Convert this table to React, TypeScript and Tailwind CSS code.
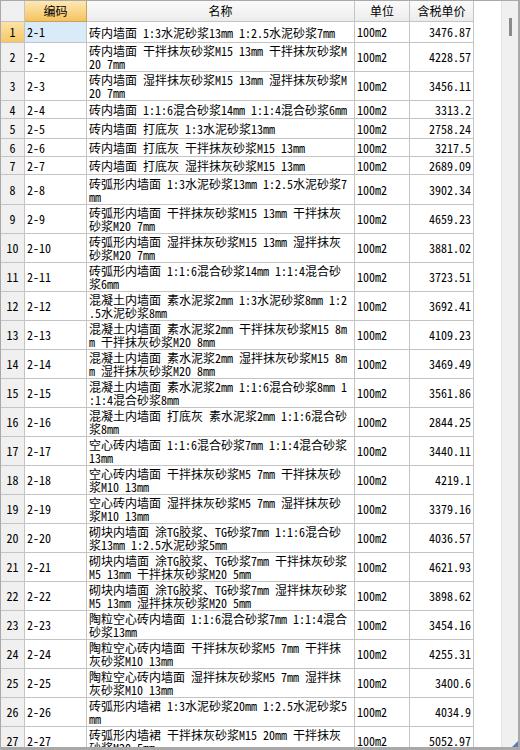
import React from "react";

type Row = {
  no: number;
  code: string;
  name: string[];
  unit: string;
  price: string;
  h: string;
};

const rows: Row[] = [
  { no: 1, code: "2-1", name: ["砖内墙面 1:3水泥砂浆13mm 1:2.5水泥砂浆7mm"], unit: "100m2", price: "3476.87", h: "h-[21px]" },
  { no: 2, code: "2-2", name: ["砖内墙面 干拌抹灰砂浆M15 13mm 干拌抹灰砂浆M", "20 7mm"], unit: "100m2", price: "4228.57", h: "h-[29px]" },
  { no: 3, code: "2-3", name: ["砖内墙面 湿拌抹灰砂浆M15 13mm 湿拌抹灰砂浆M", "20 7mm"], unit: "100m2", price: "3456.11", h: "h-[29px]" },
  { no: 4, code: "2-4", name: ["砖内墙面 1:1:6混合砂浆14mm 1:1:4混合砂浆6mm"], unit: "100m2", price: "3313.2", h: "h-[18px]" },
  { no: 5, code: "2-5", name: ["砖内墙面 打底灰 1:3水泥砂浆13mm"], unit: "100m2", price: "2758.24", h: "h-[20px]" },
  { no: 6, code: "2-6", name: ["砖内墙面 打底灰 干拌抹灰砂浆M15 13mm"], unit: "100m2", price: "3217.5", h: "h-[18px]" },
  { no: 7, code: "2-7", name: ["砖内墙面 打底灰 湿拌抹灰砂浆M15 13mm"], unit: "100m2", price: "2689.09", h: "h-[18px]" },
  { no: 8, code: "2-8", name: ["砖弧形内墙面 1:3水泥砂浆13mm 1:2.5水泥砂浆7", "mm"], unit: "100m2", price: "3902.34", h: "h-[30px]" },
  { no: 9, code: "2-9", name: ["砖弧形内墙面 干拌抹灰砂浆M15 13mm 干拌抹灰", "砂浆M20 7mm"], unit: "100m2", price: "4659.23", h: "h-[29px]" },
  { no: 10, code: "2-10", name: ["砖弧形内墙面 湿拌抹灰砂浆M15 13mm 湿拌抹灰", "砂浆M20 7mm"], unit: "100m2", price: "3881.02", h: "h-[29px]" },
  { no: 11, code: "2-11", name: ["砖弧形内墙面 1:1:6混合砂浆14mm 1:1:4混合砂", "浆6mm"], unit: "100m2", price: "3723.51", h: "h-[29px]" },
  { no: 12, code: "2-12", name: ["混凝土内墙面 素水泥浆2mm 1:3水泥砂浆8mm 1:2", ".5水泥砂浆8mm"], unit: "100m2", price: "3692.41", h: "h-[29px]" },
  { no: 13, code: "2-13", name: ["混凝土内墙面 素水泥浆2mm 干拌抹灰砂浆M15 8m", "m 干拌抹灰砂浆M20 8mm"], unit: "100m2", price: "4109.23", h: "h-[29px]" },
  { no: 14, code: "2-14", name: ["混凝土内墙面 素水泥浆2mm 湿拌抹灰砂浆M15 8m", "m 湿拌抹灰砂浆M20 8mm"], unit: "100m2", price: "3469.49", h: "h-[29px]" },
  { no: 15, code: "2-15", name: ["混凝土内墙面 素水泥浆2mm 1:1:6混合砂浆8mm 1", ":1:4混合砂浆8mm"], unit: "100m2", price: "3561.86", h: "h-[29px]" },
  { no: 16, code: "2-16", name: ["混凝土内墙面 打底灰 素水泥浆2mm 1:1:6混合砂", "浆8mm"], unit: "100m2", price: "2844.25", h: "h-[29px]" },
  { no: 17, code: "2-17", name: ["空心砖内墙面 1:1:6混合砂浆7mm 1:1:4混合砂浆", "13mm"], unit: "100m2", price: "3440.11", h: "h-[29px]" },
  { no: 18, code: "2-18", name: ["空心砖内墙面 干拌抹灰砂浆M5 7mm 干拌抹灰砂", "浆M10 13mm"], unit: "100m2", price: "4219.1", h: "h-[29px]" },
  { no: 19, code: "2-19", name: ["空心砖内墙面 湿拌抹灰砂浆M5 7mm 湿拌抹灰砂", "浆M10 13mm"], unit: "100m2", price: "3379.16", h: "h-[29px]" },
  { no: 20, code: "2-20", name: ["砌块内墙面 涂TG胶浆、TG砂浆7mm 1:1:6混合砂", "浆13mm 1:2.5水泥砂浆5mm"], unit: "100m2", price: "4036.57", h: "h-[29px]" },
  { no: 21, code: "2-21", name: ["砌块内墙面 涂TG胶浆、TG砂浆7mm 干拌抹灰砂浆", "M5 13mm 干拌抹灰砂浆M20 5mm"], unit: "100m2", price: "4621.93", h: "h-[29px]" },
  { no: 22, code: "2-22", name: ["砌块内墙面 涂TG胶浆、TG砂浆7mm 湿拌抹灰砂浆", "M5 13mm 湿拌抹灰砂浆M20 5mm"], unit: "100m2", price: "3898.62", h: "h-[29px]" },
  { no: 23, code: "2-23", name: ["陶粒空心砖内墙面 1:1:6混合砂浆7mm 1:1:4混合", "砂浆13mm"], unit: "100m2", price: "3454.16", h: "h-[29px]" },
  { no: 24, code: "2-24", name: ["陶粒空心砖内墙面 干拌抹灰砂浆M5 7mm 干拌抹", "灰砂浆M10 13mm"], unit: "100m2", price: "4255.31", h: "h-[29px]" },
  { no: 25, code: "2-25", name: ["陶粒空心砖内墙面 湿拌抹灰砂浆M5 7mm 湿拌抹", "灰砂浆M10 13mm"], unit: "100m2", price: "3400.6", h: "h-[29px]" },
  { no: 26, code: "2-26", name: ["砖弧形内墙裙 1:3水泥砂浆20mm 1:2.5水泥砂浆5", "mm"], unit: "100m2", price: "4034.9", h: "h-[29px]" },
  { no: 27, code: "2-27", name: ["砖弧形内墙裙 干拌抹灰砂浆M15 20mm 干拌抹灰", "砂浆M20 5mm"], unit: "100m2", price: "5052.97", h: "h-[29px]" },
];

const line = "border-[#c4c4c4]";

export default function App() {
  return (
    <div className="w-[520px] h-[750px] overflow-hidden bg-white font-['Noto_Sans_Mono_CJK_SC','Noto_Sans_CJK_SC',monospace] text-[12px] text-black">
      <div className="relative flex h-[750px] border-l border-t border-b-[3px] border-r-[2px] border-[#a9a9a9]">
        <div className="flex-1 overflow-hidden">
          {/* header */}
          <div className="flex h-[21px]">
            <div className={`w-[24px] shrink-0 border-r border-b ${line} bg-[#f0f0f0]`} />
            <div className="w-[62px] shrink-0 border-r border-b border-[#c9a35a] bg-gradient-to-b from-[#fde8b4] to-[#f5c35c] flex items-center justify-center">
              编码
            </div>
            <div className={`w-[268px] shrink-0 border-r border-b ${line} bg-gradient-to-b from-[#fbfbfb] to-[#ececec] flex items-center justify-center`}>
              名称
            </div>
            <div className={`w-[55px] shrink-0 border-r border-b ${line} bg-gradient-to-b from-[#fbfbfb] to-[#ececec] flex items-center justify-center`}>
              单位
            </div>
            <div className={`w-[64px] shrink-0 border-r border-b ${line} bg-gradient-to-b from-[#fbfbfb] to-[#ececec] flex items-center justify-center`}>
              含税单价
            </div>
          </div>
          {rows.map((r) => (
            <div key={r.no} className={`flex ${r.h}`}>
              <div
                className={`w-[24px] shrink-0 border-r border-b ${line} flex items-center justify-center ${
                  r.no === 1 ? "bg-gradient-to-b from-[#fde3a6] to-[#f6c767]" : "bg-[#f0f0f0]"
                }`}
              >
                {r.no}
              </div>
              <div
                className={`w-[62px] shrink-0 border-r border-b ${line} flex items-center pl-[2px] ${
                  r.no === 1 ? "bg-[#d9eaf8]" : ""
                }`}
              >
                {r.code}
              </div>
              <div className={`w-[268px] shrink-0 border-r border-b ${line} flex flex-col justify-center pl-[2px] overflow-hidden leading-[13px] whitespace-nowrap`}>
                {r.name.map((t, i) => (
                  <div key={i}>{t}</div>
                ))}
              </div>
              <div className={`w-[55px] shrink-0 border-r border-b ${line} flex items-center pl-[2px]`}>
                {r.unit}
              </div>
              <div className={`w-[64px] shrink-0 border-r border-b ${line} flex items-center justify-end pr-[2px]`}>
                {r.price}
              </div>
            </div>
          ))}
        </div>
        {/* scrollbar */}
        <div className="w-[17px] shrink-0 bg-[#f0f0f0] border-l border-[#e2e2e2] flex justify-center pt-[17px]">
          <div className="w-[3px] h-[18px] bg-[#8a8a8a]" />
        </div>
        <div className="absolute right-0 bottom-0 w-0 h-0 border-l-[6px] border-l-transparent border-b-[6px] border-b-[#5b7fb5]" />
      </div>
    </div>
  );
}
